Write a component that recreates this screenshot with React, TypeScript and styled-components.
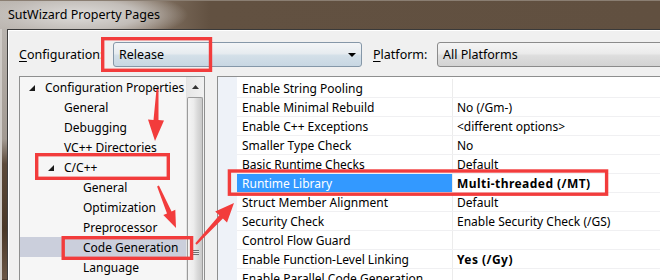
import styled, { createGlobalStyle } from 'styled-components'

const GlobalStyle = createGlobalStyle`
  html, body {
    margin: 0;
    padding: 0;
  }
  body {
    width: 660px;
    height: 280px;
    overflow: hidden;
    font-family: "Noto Sans", "Open Sans", sans-serif;
    color: #000;
  }
`

type TreeItem = { label: string; level: number; expanded?: boolean; selected?: boolean }

const treeItems: TreeItem[] = [
  { label: 'Configuration Properties', level: 0, expanded: true },
  { label: 'General', level: 1 },
  { label: 'Debugging', level: 1 },
  { label: 'VC++ Directories', level: 1 },
  { label: 'C/C++', level: 1, expanded: true },
  { label: 'General', level: 2 },
  { label: 'Optimization', level: 2 },
  { label: 'Preprocessor', level: 2 },
  { label: 'Code Generation', level: 2, selected: true },
  { label: 'Language', level: 2 },
]

type Prop = { name: string; value?: string; bold?: boolean; selected?: boolean }

const props: Prop[] = [
  { name: 'Enable String Pooling' },
  { name: 'Enable Minimal Rebuild', value: 'No (/Gm-)' },
  { name: 'Enable C++ Exceptions', value: '<different options>' },
  { name: 'Smaller Type Check', value: 'No' },
  { name: 'Basic Runtime Checks', value: 'Default' },
  { name: 'Runtime Library', value: 'Multi-threaded (/MT)', bold: true, selected: true },
  { name: 'Struct Member Alignment', value: 'Default' },
  { name: 'Security Check', value: 'Enable Security Check (/GS)' },
  { name: 'Control Flow Guard' },
  { name: 'Enable Function-Level Linking', value: 'Yes (/Gy)', bold: true },
  { name: 'Enable Parallel Code Generation' },
]

const Window = styled.div`
  position: relative;
  width: 660px;
  height: 280px;
  overflow: hidden;
  display: flex;
  flex-direction: column;
  background: #5f4e3e;
`

const TitleBar = styled.div`
  height: 29px;
  flex: none;
  box-sizing: border-box;
  display: flex;
  align-items: center;
  padding: 0 0 2px 8px;
  font-size: 12.5px;
  white-space: nowrap;
  border-top: 1px solid #8a7e72;
  background:
    radial-gradient(ellipse 110px 26px at 78px 14px, rgba(222, 220, 218, 1) 0%, rgba(200, 196, 192, 0.9) 55%, rgba(98, 81, 65, 0) 100%),
    linear-gradient(90deg, #b8b2ac 0, #8a7a6b 140px, #625141 210px, #615040 100%);
`

const Body = styled.div`
  flex: 1;
  display: flex;
  min-height: 0;
`

const SideFrame = styled.div`
  width: 7px;
  flex: none;
  background:
    linear-gradient(90deg, #cfcbc7 0, #cfcbc7 2px, rgba(0, 0, 0, 0) 2px),
    linear-gradient(180deg, #b9b4af 0, #a29a92 110px, #5c4a3a 135px, #4a3828 200px, #6a5646 250px, #3a2a1c 100%);
`

const Client = styled.div`
  flex: 1;
  min-width: 0;
  background: #f0f0f0;
  border-left: 1px solid #3e3e3e;
  border-top: 1px solid #3a3a3a;
  box-shadow: inset 1px 1px 0 #ffffff;
  padding: 12px 0 0 11px;
  display: flex;
  flex-direction: column;
  gap: 9px;
  font-size: 12px;
`

const Toolbar = styled.div`
  display: flex;
  align-items: center;
  height: 25px;
  white-space: nowrap;
`

const Label = styled.div<{ $width: number; $gap?: number }>`
  width: ${(p) => p.$width}px;
  margin-left: ${(p) => p.$gap ?? 0}px;
  flex: none;
  font-size: 12.5px;
  u {
    text-decoration: underline;
    text-underline-offset: 2px;
  }
`

const Combo = styled.div<{ $width: number; $hot?: boolean }>`
  width: ${(p) => p.$width}px;
  flex: none;
  height: 25px;
  box-sizing: border-box;
  border: 1px solid ${(p) => (p.$hot ? '#8597a8' : '#8b8b8b')};
  border-radius: 3px;
  background: ${(p) =>
    p.$hot
      ? 'linear-gradient(180deg, #f3f5f7 0%, #e7ecf0 45%, #d3dfe8 55%, #c8d7e3 100%)'
      : 'linear-gradient(180deg, #f4f4f4 0%, #ebebeb 45%, #dddddd 55%, #d3d3d3 100%)'};
  display: flex;
  align-items: center;
  padding-left: 5px;
  font-size: 12.5px;
`

const ComboText = styled.span`
  flex: 1;
`

const ComboArrow = styled.span`
  width: 0;
  height: 0;
  margin-right: 5px;
  border-left: 4px solid transparent;
  border-right: 4px solid transparent;
  border-top: 4px solid #000;
`

const Panels = styled.div`
  flex: 1;
  display: flex;
  gap: 12px;
  min-height: 0;
`

const Tree = styled.div`
  width: 186px;
  flex: none;
  box-sizing: border-box;
  border: 1px solid #8e8f8f;
  border-bottom: none;
  background: #f6f6f6;
  display: flex;
`

const TreeList = styled.div`
  flex: 1;
  min-width: 0;
  overflow: hidden;
`

const TreeRow = styled.div<{ $selected?: boolean }>`
  height: 20px;
  display: flex;
  align-items: center;
  white-space: nowrap;
  background: ${(p) => (p.$selected ? '#cbcfdc' : 'transparent')};
`

const Expander = styled.span<{ $level: number }>`
  width: 19px;
  flex: none;
  margin-left: ${(p) => 6 + p.$level * 19}px;
  display: flex;
  align-items: center;
  svg {
    margin-left: 3px;
    margin-top: 2px;
  }
`

const Scrollbar = styled.div`
  width: 17px;
  flex: none;
  border-left: 1px solid #e3e3e3;
  background: linear-gradient(90deg, #e6e6e6, #f1f1f1);
  display: flex;
  flex-direction: column;
`

const ScrollButton = styled.div`
  height: 20px;
  display: flex;
  align-items: center;
  justify-content: center;
`

const Thumb = styled.div`
  flex: 1;
  margin: 0 1px 0 0;
  border: 1px solid #9b9b9b;
  border-bottom: none;
  border-radius: 2px 2px 0 0;
  background: linear-gradient(90deg, #f4f4f4 0%, #ececec 40%, #d8d8d8 70%, #c9c9c9 100%);
  display: flex;
  flex-direction: column;
  align-items: center;
  padding-top: 152px;
`

const Grip = styled.div`
  width: 7px;
  height: 5px;
  background: repeating-linear-gradient(180deg, #6f6f6f 0, #6f6f6f 1px, #e8e8e8 1px, #e8e8e8 2px);
`

const Grid = styled.div`
  flex: 1;
  min-width: 0;
  border-left: 1px solid #8e8f8f;
  border-top: 1px solid #8e8f8f;
  background: #ffffff;
  display: flex;
  overflow: hidden;
`

const Gutter = styled.div`
  width: 19px;
  flex: none;
  background: #eef2f8;
`

const Rows = styled.div`
  flex: 1;
  min-width: 0;
  padding-top: 2px;
`

const PropRow = styled.div`
  height: 19px;
  box-sizing: border-box;
  border-bottom: 1px solid #f0f0f2;
  display: grid;
  grid-template-columns: 216px 1fr;
  white-space: nowrap;
`

const NameCell = styled.div<{ $selected?: boolean }>`
  border-right: 1px solid #ececec;
  padding-left: 5px;
  display: flex;
  align-items: center;
  overflow: hidden;
  background: ${(p) => (p.$selected ? '#3399ff' : 'transparent')};
  color: ${(p) => (p.$selected ? '#ffffff' : '#000')};
`

const ValueCell = styled.div<{ $bold?: boolean }>`
  padding-left: 4px;
  display: flex;
  align-items: center;
  font-weight: ${(p) => (p.$bold ? 700 : 400)};
  letter-spacing: ${(p) => (p.$bold ? '0.45px' : '0')};
`

const Annotations = styled.svg`
  position: absolute;
  left: 0;
  top: 0;
  pointer-events: none;
`

const arrow = (
  tail: [number, number],
  tip: [number, number],
  headLen: number,
  headW: number,
  tailW: number,
  neckW: number,
) => {
  const dx = tip[0] - tail[0]
  const dy = tip[1] - tail[1]
  const len = Math.hypot(dx, dy)
  const ux = dx / len
  const uy = dy / len
  const nx = -uy
  const ny = ux
  const bx = tip[0] - ux * headLen
  const by = tip[1] - uy * headLen
  const pts = [
    [tail[0] + (nx * tailW) / 2, tail[1] + (ny * tailW) / 2],
    [bx + (nx * neckW) / 2, by + (ny * neckW) / 2],
    [bx + (nx * headW) / 2, by + (ny * headW) / 2],
    tip,
    [bx - (nx * headW) / 2, by - (ny * headW) / 2],
    [bx - (nx * neckW) / 2, by - (ny * neckW) / 2],
    [tail[0] - (nx * tailW) / 2, tail[1] - (ny * tailW) / 2],
  ]
  return pts.map((p) => `${p[0].toFixed(1)},${p[1].toFixed(1)}`).join(' ')
}

const RED = '#f23c3c'

const ExpandGlyph = () => (
  <svg width='6' height='6' viewBox='0 0 6 6'>
    <polygon points='6,0 6,6 0,6' fill='#1a1a1a' />
  </svg>
)

export default function App() {
  return (
    <Window>
      <GlobalStyle />
      <TitleBar>SutWizard Property Pages</TitleBar>
      <Body>
        <SideFrame />
        <Client>
          <Toolbar>
            <Label $width={94}>
              <u>C</u>onfiguration:
            </Label>
            <Combo $width={249} $hot>
              <ComboText>Release</ComboText>
              <ComboArrow />
            </Combo>
            <Label $width={64} $gap={11}>
              <u>P</u>latform:
            </Label>
            <Combo $width={240}>
              <ComboText>All Platforms</ComboText>
            </Combo>
          </Toolbar>
          <Panels>
            <Tree>
              <TreeList>
                {treeItems.map((item, i) => (
                  <TreeRow key={i} $selected={item.selected}>
                    <Expander $level={item.level}>{item.expanded && <ExpandGlyph />}</Expander>
                    {item.label}
                  </TreeRow>
                ))}
              </TreeList>
              <Scrollbar>
                <ScrollButton>
                  <svg width='7' height='4' viewBox='0 0 7 4'>
                    <polygon points='0,4 3.5,0 7,4' fill='#333' />
                  </svg>
                </ScrollButton>
                <Thumb>
                  <Grip />
                </Thumb>
              </Scrollbar>
            </Tree>
            <Grid>
              <Gutter />
              <Rows>
                {props.map((p, i) => (
                  <PropRow key={i}>
                    <NameCell $selected={p.selected}>{p.name}</NameCell>
                    <ValueCell $bold={p.bold}>{p.value}</ValueCell>
                  </PropRow>
                ))}
              </Rows>
            </Grid>
          </Panels>
        </Client>
      </Body>
      <Annotations width='660' height='280' viewBox='0 0 660 280'>
        <g fill='none' stroke={RED} strokeWidth='3.4'>
          <rect x='102.7' y='38.7' width='107.8' height='31.6' />
          <rect x='36.7' y='154.7' width='131.6' height='23.6' />
          <rect x='63.2' y='237.7' width='128.4' height='20.6' />
          <rect x='229.4' y='171' width='377.2' height='23.2' />
        </g>
        <g fill={RED}>
          <polygon points={arrow([157.5, 89], [155, 141], 21, 16, 2, 5)} />
          <polygon points={arrow([158, 186], [176, 228], 17, 13, 2, 5)} />
          <polygon points={arrow([196, 244], [234, 203], 19, 16, 2, 5)} />
        </g>
      </Annotations>
    </Window>
  )
}
